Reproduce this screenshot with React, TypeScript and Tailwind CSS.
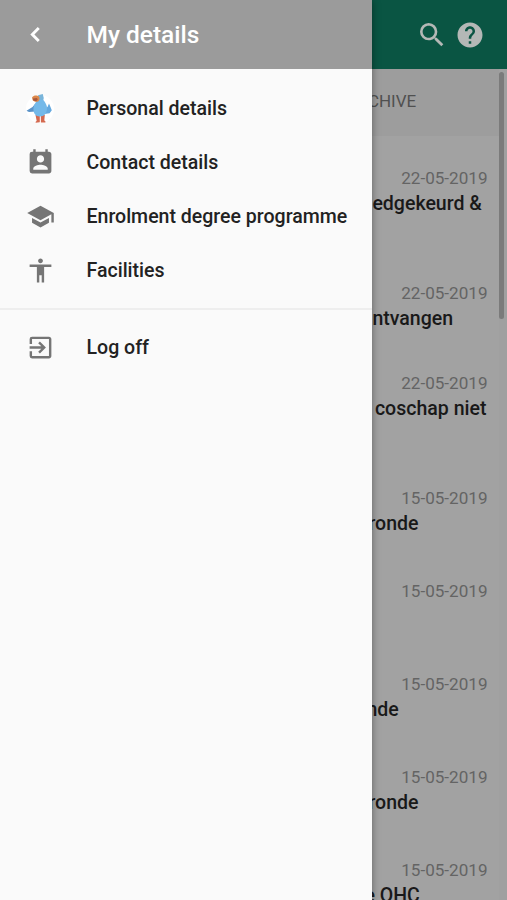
import {
  MdAccessibility,
  MdExitToApp,
  MdHelp,
  MdPermContactCalendar,
  MdSchool,
  MdSearch,
} from 'react-icons/md';

function BirdAvatar() {
  return (
    <svg viewBox="0 0 30 32" className="mt-[2px] h-8 w-[30px]">
      <circle cx="15" cy="16" r="14" fill="#ffffff" />
      <path d="M10.500 22h4.300v7.300l-4.200.5.200-1.300 .9-.5zM15.800 22h4l-.5 5.600 1.100.7v1.300l-4.500-.1z" fill="#d4694f" />
      <path d="M10 11 7.500 14 1.500 17.800l2.500 1.100 6.200-.3z" fill="#5b93c8" />
      <path d="M19 15.500l3.500-1.500 1.500-3.500 1.600 3.700 1.200 3-2.200 3-5.200.800z" fill="#65a9df" />
      <path d="M11 6c2-3 6.700-4.500 7.100-2l.3 3c2.100 2.700 3.900 5.500 3.600 8.500-.3 5-2.800 8-7 8-4.600 0-6.500-3.500-6.600-7-.1-2.700 1-5.300 2.600-7.500z" fill="#74b9e9" />
      <path d="M13 2.300l4.800-1.200.9 3.800-.7 2-4.200-.6z" fill="#7ab5da" />
      <path d="M7 4.500c1-2.300 5.300-2.600 6.700-1.200 1.200 1.300 1.100 4-.3 4.900-1.600 1-5 .4-5.700-1z" fill="#dc884b" />
      <path d="M7.800 5.600l4.200-.6.800 1.500-1.700 1.700-2.700-.8z" fill="#a9583c" />
    </svg>
  );
}

const menu = [
  { label: 'Personal details', icon: <BirdAvatar /> },
  { label: 'Contact details', icon: <MdPermContactCalendar size={29} /> },
  { label: 'Enrolment degree programme', icon: <MdSchool size={29} /> },
  { label: 'Facilities', icon: <MdAccessibility size={29} /> },
];

const messages = [
  { date: '22-05-2019', title: 'edgekeurd &', height: 'h-[115px]', shift: '' },
  { date: '22-05-2019', title: 'ntvangen', height: 'h-[90px]', shift: '' },
  { date: '22-05-2019', title: 'coschap niet', height: 'h-[115px]', shift: 'ml-[2.500px]' },
  { date: '15-05-2019', title: 'ronde', height: 'h-[93px]', shift: '-ml-[4px]' },
  { date: '15-05-2019', title: '', height: 'h-[93px]', shift: '' },
  { date: '15-05-2019', title: 'nde', height: 'h-[93px]', shift: '-ml-[6px]' },
  { date: '15-05-2019', title: 'ronde', height: 'h-[92.500px]', shift: '-ml-[4px]' },
  { date: '15-05-2019', title: 'e OHC', height: 'h-[93px]', shift: '-ml-[8px]' },
];

function MenuItem({ label, icon }: { label: string; icon: React.ReactNode }) {
  return (
    <li className="flex h-[54px] items-center">
      <span className="flex w-[86.500px] justify-center pr-[6.500px] text-[#757575]">{icon}</span>
      <span className="pt-[2px] whitespace-nowrap">{label}</span>
    </li>
  );
}

export default function App() {
  return (
    <div className="flex h-[900px] w-[507px] overflow-hidden bg-[#a2a2a2] font-['Roboto',sans-serif]">
      <aside className="z-10 flex w-[372.400px] shrink-0 flex-col bg-[#fafafa] shadow-[0_0_8px_rgba(0,0,0,0.4)]">
        <header className="flex h-[69px] shrink-0 items-center bg-[#9b9b9b] text-white">
          <span className="flex w-[86.500px] justify-center pr-[16.500px]">
            <svg viewBox="0 0 24 24" className="size-[29px]" fill="none" stroke="currentColor" strokeWidth="2.4">
              <path d="M14.700 6.700 9.400 12l5.300 5.300" />
            </svg>
          </span>
          <h1 className="pt-[2px] text-[24.500px] font-medium">My details</h1>
        </header>
        <nav className="text-[19.550px] font-medium text-[#222222]">
          <ul className="border-b-2 border-[#eeeeee] pt-[12px] pb-[11px]">
            {menu.map((item) => (
              <MenuItem key={item.label} {...item} />
            ))}
          </ul>
          <ul className="pt-[10px]">
            <MenuItem label="Log off" icon={<MdExitToApp size={29} />} />
          </ul>
        </nav>
      </aside>
      <main className="flex min-w-0 flex-1 flex-col overflow-hidden">
        <header className="flex h-[69px] shrink-0 items-center justify-end gap-[7px] bg-[#0a5543] pr-[22px] text-[#b4b8b6]">
          <MdSearch size={32} />
          <MdHelp size={30} />
        </header>
        <div className="flex min-h-0 flex-1">
          <div className="min-w-0 flex-1 overflow-hidden">
            <div className="flex h-[67px] items-center bg-[#9d9d9d] pb-[2px]">
              <span className="-ml-[4.500px] text-[17px] text-[#505050]">CHIVE</span>
            </div>
            <ul className="pt-[30px]">
              {messages.map((message, index) => (
                <li key={index} className={message.height}>
                  <p className="pr-[11.500px] text-right text-[17.100px] leading-[25px] text-[#646464]">{message.date}</p>
                  <p className={`whitespace-nowrap text-[19.550px] leading-[25px] font-medium text-[#191919] ${message.shift}`}>
                    {message.title}
                  </p>
                </li>
              ))}
            </ul>
          </div>
          <div className="w-[8px] shrink-0 bg-[#a0a0a0] pt-[3px]">
            <div className="h-[247px] w-[5px] rounded-full bg-[#7b7b7b]" />
          </div>
        </div>
      </main>
    </div>
  );
}
